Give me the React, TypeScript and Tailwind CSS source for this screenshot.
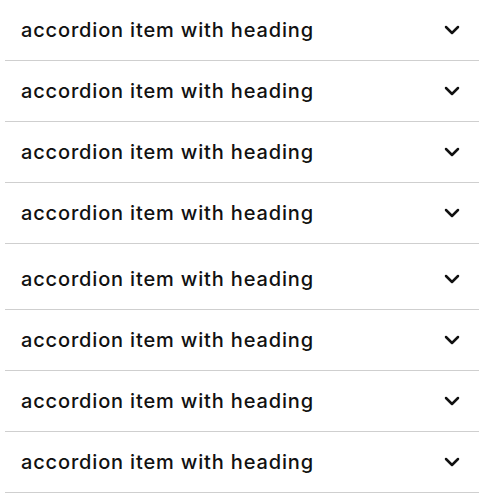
import { ChevronDown } from "lucide-react";

const groups = [4, 4];

function Row() {
  return (
    <div className="flex h-[61px] items-center justify-between border-b border-[#cfcfcf] pl-4 pr-[15px]">
      <span className="text-[20px] font-medium tracking-[0.042em] text-[#111]">accordion item with heading</span>
      <ChevronDown size={24} strokeWidth={2.5} className="text-[#111]" />
    </div>
  );
}

export default function App() {
  return (
    <div className="bg-white px-[5px] font-['Inter',sans-serif]">
      {groups.map((count, g) => (
        <div key={g} className={g > 0 ? "mt-[5px]" : ""}>
          {Array.from({ length: count }).map((_, i) => (
            <Row key={i} />
          ))}
        </div>
      ))}
    </div>
  );
}
